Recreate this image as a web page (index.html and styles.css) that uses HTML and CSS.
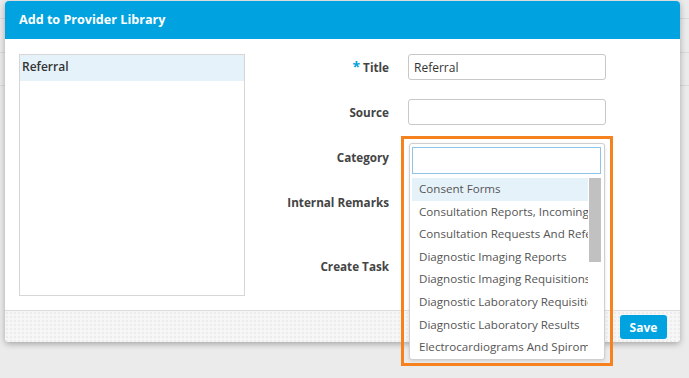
FILE: index.html
```html
<!DOCTYPE html>
<html lang="en">
<head>
    <meta charset="UTF-8">
    <meta name="viewport" content="width=device-width, initial-scale=1.0">
    <title>Add to Provider Library</title>
    <link rel="stylesheet" href="styles.css">
</head>
<body>
    <div class="modal">
        <div class="modal-header">Add to Provider Library</div>

        <div class="modal-body">
            <div class="doc-list">
                <div class="doc-item selected">Referral</div>
            </div>

            <div class="form">
                <label class="form-label"><span class="required">*</span> Title</label>
                <input class="form-input" type="text" value="Referral">

                <label class="form-label">Source</label>
                <input class="form-input" type="text">

                <label class="form-label">Category</label>
                <div class="form-slot"></div>

                <label class="form-label">Internal Remarks</label>
                <div class="form-slot"></div>

                <label class="form-label">Create Task</label>
                <div class="form-slot"></div>
            </div>
        </div>

        <div class="modal-footer">
            <button class="save-btn">Save</button>
        </div>

        <!-- highlighted category dropdown -->
        <div class="highlight">
            <div class="dropdown">
                <input class="dropdown-search" type="text">
                <div class="dropdown-results">
                    <div class="options">
                        <div class="option active">Consent Forms</div>
                        <div class="option">Consultation Reports, Incoming</div>
                        <div class="option">Consultation Requests And Referrals</div>
                        <div class="option">Diagnostic Imaging Reports</div>
                        <div class="option">Diagnostic Imaging Requisitions</div>
                        <div class="option">Diagnostic Laboratory Requisitions</div>
                        <div class="option">Diagnostic Laboratory Results</div>
                        <div class="option">Electrocardiograms And Spirometry</div>
                    </div>
                    <div class="scrollbar">
                        <div class="scroll-thumb"></div>
                    </div>
                </div>
            </div>
        </div>
    </div>
</body>
</html>
```

FILE: styles.css
```css
body {
    margin: 0;
    height: 378px;
    overflow: hidden;
    font-family: "Open Sans", Arial, sans-serif;
    font-size: 12px;
    color: #444;
    background-color: #ebebeb;
    background-image:
        linear-gradient(#dadada, #dadada),
        linear-gradient(#dadada, #dadada),
        linear-gradient(#dadada, #dadada);
    background-size: 100% 1px;
    background-position: 0 18px, 0 52px, 0 85px;
    background-repeat: no-repeat;
}

.modal {
    position: relative;
    margin: 1px 0 0 5px;
    width: 675px;
    background-color: white;
    border-radius: 4px;
    box-shadow: 0 2px 6px rgba(0, 0, 0, 0.3);
}

.modal-header {
    height: 38px;
    line-height: 38px;
    padding-left: 14px;
    background-color: #00a3e0;
    color: white;
    font-size: 12.6px;
    font-weight: bold;
    border-radius: 4px 4px 0 0;
}

.modal-body {
    display: flex;
    height: 271px;
    box-sizing: border-box;
    padding: 15px 14px 14px;
}

.doc-list {
    width: 226px;
    height: 242px;
    box-sizing: border-box;
    border: 1px solid #d6d6d6;
}

.doc-item {
    height: 26px;
    line-height: 24px;
    padding-left: 2px;
    color: #333;
    font-weight: 600;
}

.doc-item.selected {
    background-color: #e6f2fa;
}

.form {
    display: grid;
    grid-template-columns: 144px 198px;
    grid-template-rows: 26px 26px 26px 45px 26px;
    column-gap: 19px;
    row-gap: 19px;
    align-items: start;
}

.form-label {
    height: 26px;
    line-height: 26px;
    text-align: right;
    font-size: 11.7px;
    font-weight: bold;
    color: #444;
}

.required {
    color: #00a3e0;
    font-size: 14px;
    line-height: 1;
}

.form-input {
    height: 26px;
    box-sizing: border-box;
    border: 1px solid #c8c8c8;
    border-radius: 3px;
    padding: 0 5px;
    font-family: inherit;
    font-size: 12px;
    color: #333;
}

.form-slot {
    height: 26px;
}

.modal-footer {
    display: flex;
    justify-content: flex-end;
    height: 32px;
    box-sizing: border-box;
    padding: 4px 13px 0;
    border-top: 1px solid #dcdcdc;
    border-radius: 0 0 4px 4px;
    background-color: #f6f6f6;
    background-image: radial-gradient(#ececec 0.8px, transparent 1px);
    background-size: 4px 4px;
}

.save-btn {
    width: 47px;
    height: 24px;
    border: none;
    border-radius: 3px;
    background-color: #00a3e0;
    color: white;
    font-family: inherit;
    font-size: 12px;
    font-weight: bold;
    padding: 0;
}

.highlight {
    position: absolute;
    left: 396px;
    top: 135px;
    border: 3px solid #f5821f;
    padding: 4px 5px 3px 5px;
}

.dropdown {
    width: 196px;
    height: 217px;
    box-sizing: border-box;
    border: 1px solid #cfcfcf;
    border-radius: 3px;
    background-color: white;
    box-shadow: 0 1px 3px rgba(0, 0, 0, 0.12);
    overflow: hidden;
}

.dropdown-search {
    display: block;
    width: 189px;
    height: 27px;
    box-sizing: border-box;
    margin: 3px 0 0 2px;
    border: 1px solid #8ec3ea;
    outline: none;
}

.dropdown-results {
    display: flex;
    margin: 4px 0 0 2px;
}

.options {
    width: 176px;
}

.option {
    height: 22.6px;
    line-height: 21.5px;
    padding-left: 7px;
    white-space: nowrap;
    overflow: hidden;
    font-size: 11.6px;
    color: #555;
}

.option.active {
    background-color: #e6f2fa;
}

.scrollbar {
    width: 12px;
    margin-left: 1px;
}

.scroll-thumb {
    height: 84px;
    background-color: #c1c1c1;
}
```
